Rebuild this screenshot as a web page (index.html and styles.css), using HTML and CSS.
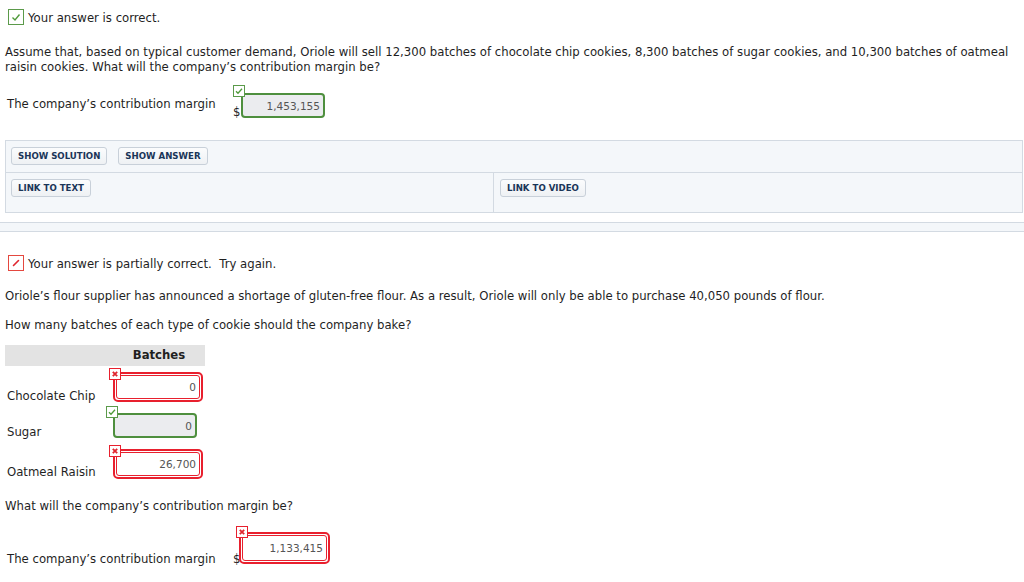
FILE: index.html
```html
<!DOCTYPE html>
<html lang="en">
<head>
    <meta charset="UTF-8">
    <title>Question - Contribution Margin</title>
    <link rel="stylesheet" href="styles.css">
</head>
<body>
    <!-- Part 1: correct -->
    <div class="status">
        <span class="status-icon correct">
            <svg width="14" height="14" viewBox="0 0 14 14"><path d="M3.5 7.5 L6 10 L10.5 4.5" fill="none" stroke="#4f9a3a" stroke-width="1.4"/></svg>
        </span>
        <span class="status-text">Your answer is correct.</span>
    </div>

    <p class="question question-first">Assume that, based on typical customer demand, Oriole will sell 12,300 batches of chocolate chip cookies, 8,300 batches of sugar cookies, and 10,300 batches of oatmeal raisin cookies. What will the company’s contribution margin be?</p>

    <div class="answer-row answer-row-first">
        <span class="answer-label">The company’s contribution margin</span>
        <span class="dollar">$</span>
        <span class="field-wrap">
            <span class="mark mark-ok">
                <svg width="10" height="10" viewBox="0 0 10 10"><path d="M2 5.2 L4 7.2 L8 2.8" fill="none" stroke="#4f9a3a" stroke-width="1.3"/></svg>
            </span>
            <input type="text" class="field field-ok" value="1,453,155" readonly>
        </span>
    </div>

    <div class="panel">
        <div class="panel-row">
            <button class="panel-button">SHOW SOLUTION</button>
            <button class="panel-button">SHOW ANSWER</button>
        </div>
        <div class="panel-row panel-split">
            <div class="panel-cell">
                <button class="panel-button">LINK TO TEXT</button>
            </div>
            <div class="panel-cell">
                <button class="panel-button">LINK TO VIDEO</button>
            </div>
        </div>
    </div>

    <div class="divider"></div>

    <!-- Part 2: partially correct -->
    <div class="status status-second">
        <span class="status-icon partial">
            <svg width="14" height="14" viewBox="0 0 14 14"><path d="M4.5 9.5 L9.5 4.5" fill="none" stroke="#e0262f" stroke-width="1.6" stroke-linecap="round"/></svg>
        </span>
        <span class="status-text">Your answer is partially correct.&nbsp; Try again.</span>
    </div>

    <p class="question question-gap">Oriole’s flour supplier has announced a shortage of gluten-free flour. As a result, Oriole will only be able to purchase 40,050 pounds of flour.</p>

    <p class="question question-small-gap">How many batches of each type of cookie should the company bake?</p>

    <table class="batch-table">
        <thead>
            <tr>
                <th class="label-col"></th>
                <th class="input-col">Batches</th>
            </tr>
        </thead>
        <tbody>
            <tr class="row-first">
                <td class="row-label">Chocolate Chip</td>
                <td>
                    <span class="field-wrap wrong">
                        <span class="mark mark-bad">
                            <svg width="10" height="10" viewBox="0 0 10 10"><path d="M2.8 2.8 L7.2 7.2 M7.2 2.8 L2.8 7.2" fill="none" stroke="#e0262f" stroke-width="1.8"/></svg>
                        </span>
                        <input type="text" class="field field-bad" value="0" readonly>
                    </span>
                </td>
            </tr>
            <tr class="row-second">
                <td class="row-label">Sugar</td>
                <td>
                    <span class="field-wrap">
                        <span class="mark mark-ok">
                            <svg width="10" height="10" viewBox="0 0 10 10"><path d="M2 5.2 L4 7.2 L8 2.8" fill="none" stroke="#4f9a3a" stroke-width="1.3"/></svg>
                        </span>
                        <input type="text" class="field field-ok" value="0" readonly>
                    </span>
                </td>
            </tr>
            <tr class="row-third">
                <td class="row-label">Oatmeal Raisin</td>
                <td>
                    <span class="field-wrap wrong">
                        <span class="mark mark-bad">
                            <svg width="10" height="10" viewBox="0 0 10 10"><path d="M2.8 2.8 L7.2 7.2 M7.2 2.8 L2.8 7.2" fill="none" stroke="#e0262f" stroke-width="1.8"/></svg>
                        </span>
                        <input type="text" class="field field-bad" value="26,700" readonly>
                    </span>
                </td>
            </tr>
        </tbody>
    </table>

    <p class="question question-after-table">What will the company’s contribution margin be?</p>

    <div class="answer-row answer-row-last">
        <span class="answer-label">The company’s contribution margin</span>
        <span class="dollar">$</span>
        <span class="field-wrap wrong wide">
            <span class="mark mark-bad">
                <svg width="10" height="10" viewBox="0 0 10 10"><path d="M2.8 2.8 L7.2 7.2 M7.2 2.8 L2.8 7.2" fill="none" stroke="#e0262f" stroke-width="1.8"/></svg>
            </span>
            <input type="text" class="field field-bad" value="1,133,415" readonly>
        </span>
    </div>
</body>
</html>
```

FILE: styles.css
```css
/* Reset and base styles */
* {
    margin: 0;
    padding: 0;
    box-sizing: border-box;
}
body {
    font-family: Verdana, "DejaVu Sans", sans-serif;
    font-size: 11.7px;
    line-height: 15px;
    color: #1f1f1f;
    background-color: #fff;
    padding-bottom: 16px;
}

/* Result status line */
.status {
    display: flex;
    align-items: center;
    gap: 4px;
    padding: 9px 0 0 8px;
    height: 25px;
}
.status-text {
    padding-top: 2px;
}
.status-second {
    margin-top: 23px;
    padding-top: 0;
    height: 16px;
}
.status-icon {
    width: 16px;
    height: 16px;
    display: flex;
    align-items: center;
    justify-content: center;
    background-color: #fff;
}
.status-icon.correct {
    border: 1px solid #5b9a4a;
}
.status-icon.partial {
    border: 1px solid #e4483f;
}

/* Question text */
.question {
    padding: 0 0 0 5px;
}
.question-first {
    margin-top: 20px;
}
.question-gap {
    margin-top: 18px;
}
.question-small-gap {
    margin-top: 14px;
}
.question-after-table {
    margin-top: 16px;
}

/* Answer rows */
.answer-row {
    display: flex;
    align-items: flex-end;
    padding-left: 7px;
}
.answer-row-first {
    margin-top: 18px;
}
.answer-row-first .answer-label {
    padding-bottom: 6px;
}
.answer-row-last {
    margin-top: 18px;
}
.answer-label {
    width: 226px;
}
.dollar {
    width: 8px;
    margin-bottom: -2px;
}
.answer-row-last .dollar {
    margin-bottom: 0;
}

/* Input fields */
.field-wrap {
    position: relative;
    display: block;
    width: 84px;
    height: 25px;
}
.field {
    display: block;
    width: 100%;
    height: 100%;
    font-family: Verdana, "DejaVu Sans", sans-serif;
    font-size: 10.5px;
    color: #555;
    text-align: right;
    padding: 0 3px;
    border-radius: 4px;
}
.field-ok {
    border: 2px solid #4e8f3e;
    background-color: #ebecef;
}
.field-wrap.wrong {
    width: 90px;
    height: 30px;
    border: 2px solid #e8202e;
    border-radius: 5px;
    padding: 1px;
    background-color: #fff;
}
.field-wrap.wide {
    width: 91px;
    height: 32px;
    margin: 0 0 3px -2px;
}
.field-bad {
    border: 1.5px solid #e8202e;
    border-radius: 3px;
    background-color: #fff;
}

/* Small marks over the field corner */
.mark {
    position: absolute;
    top: -8px;
    left: -8px;
    width: 12px;
    height: 12px;
    display: flex;
    align-items: center;
    justify-content: center;
    background-color: #fff;
    z-index: 1;
}
.row-second .mark {
    top: -7px;
    left: -7px;
}
.wrong .mark {
    top: -6px;
    left: -6px;
}
.wide .mark {
    top: -8px;
    left: -5px;
}
.mark-ok {
    border: 1px solid #5b9a4a;
}
.mark-bad {
    border: 1px solid #e8202e;
}

/* Help panel */
.panel {
    margin: 22px 1px 0 5px;
    border: 1px solid #d3dae2;
    background-color: #f4f7fa;
}
.panel-row {
    display: flex;
    align-items: flex-start;
    gap: 11px;
    height: 32px;
    padding: 6px 5px 0;
    border-bottom: 1px solid #d3dae2;
}
.panel-split {
    height: 39px;
    padding: 0;
    gap: 0;
    border-bottom: none;
}
.panel-cell {
    height: 100%;
    padding: 6px 5px 0;
}
.panel-cell:first-child {
    width: 487px;
}
.panel-cell + .panel-cell {
    border-left: 1px solid #d3dae2;
    padding-left: 6px;
}
.panel-button {
    height: 18px;
    padding: 0 6px;
    font-family: Verdana, "DejaVu Sans", sans-serif;
    font-size: 8.6px;
    font-weight: bold;
    color: #1a3558;
    background: linear-gradient(#fbfcfd, #eef1f4);
    border: 1px solid #c8d0d9;
    border-radius: 3px;
    cursor: pointer;
}

.divider {
    margin-top: 9px;
    height: 10px;
    border-top: 1px solid #d3dae2;
    border-bottom: 1px solid #d3dae2;
    background-color: #f4f7fa;
}

/* Batches table */
.batch-table {
    margin: 12px 0 0 5px;
    border-collapse: collapse;
}
.batch-table th {
    height: 21px;
    background-color: #e3e3e3;
    font-weight: bold;
    text-align: center;
    padding: 0;
}
.label-col {
    width: 108px;
}
.input-col {
    width: 92px;
}
.batch-table td {
    padding: 0 0 4px;
    vertical-align: bottom;
}
.row-first td {
    height: 40px;
}
.row-second td {
    height: 36px;
}
.row-third td {
    height: 41px;
}
.row-label {
    padding-left: 2px !important;
    padding-bottom: 2px !important;
}
.row-third .row-label {
    padding-bottom: 3px !important;
}
```
